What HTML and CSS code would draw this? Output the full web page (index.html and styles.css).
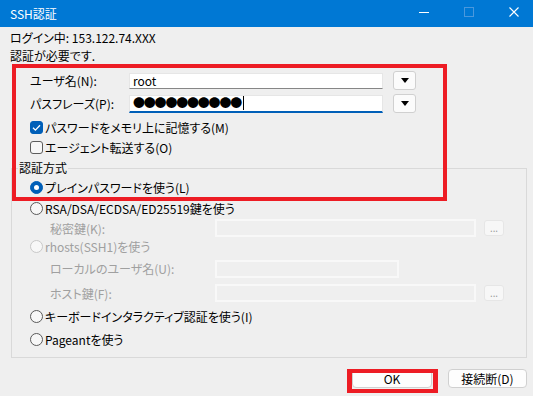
FILE: index.html
```html
<!DOCTYPE html>
<html lang="ja">
<head>
  <meta charset="UTF-8" />
  <title>SSH認証</title>
  <link rel="stylesheet" href="styles.css">
</head>
<body>
  <div class="window">
    <div class="titlebar">
      <span class="title">SSH認証</span>
      <div class="controls">
        <span class="ctl min"></span>
        <span class="ctl max"></span>
        <span class="ctl close">
          <svg width="10" height="10" viewBox="0 0 10 10"><path d="M0.5 0.5L9.5 9.5M9.5 0.5L0.5 9.5" stroke="#fff" stroke-width="1.1" fill="none"/></svg>
        </span>
      </div>
    </div>

    <div class="content">
      <div class="info">ログイン中: 153.122.74.XXX</div>
      <div class="info">認証が必要です.</div>

      <div class="field-row user">
        <span class="field-label">ユーザ名(N):</span>
        <div class="text-input">root</div>
        <button class="drop"><span class="tri"></span></button>
      </div>
      <div class="field-row pass">
        <span class="field-label">パスフレーズ(P):</span>
        <div class="text-input focused"><span class="dots">●●●●●●●●●●</span><span class="caret"></span></div>
        <button class="drop"><span class="tri"></span></button>
      </div>

      <div class="check-row first">
        <span class="check on">
          <svg width="13" height="13" viewBox="0 0 13 13"><path d="M3 6.8L5.4 9.1L10 4.2" stroke="#fff" stroke-width="1.3" fill="none"/></svg>
        </span>
        <span>パスワードをメモリ上に記憶する(M)</span>
      </div>
      <div class="check-row">
        <span class="check"></span>
        <span>エージェント転送する(O)</span>
      </div>

      <fieldset class="group">
        <legend>認証方式</legend>
        <div class="opt h21"><span class="radio on"></span><span>プレインパスワードを使う(L)</span></div>
        <div class="opt h21"><span class="radio"></span><span>RSA/DSA/ECDSA/ED25519鍵を使う</span></div>
        <div class="sub h18">
          <span class="sub-label">秘密鍵(K):</span>
          <div class="text-input disabled wide"></div>
          <button class="more">...</button>
        </div>
        <div class="opt h19 disabled"><span class="radio dim"></span><span>rhosts(SSH1)を使う</span></div>
        <div class="sub h25">
          <span class="sub-label">ローカルのユーザ名(U):</span>
          <div class="text-input disabled short"></div>
        </div>
        <div class="sub h24">
          <span class="sub-label">ホスト鍵(F):</span>
          <div class="text-input disabled wide"></div>
          <button class="more">...</button>
        </div>
        <div class="opt h23"><span class="radio"></span><span>キーボードインタラクティブ認証を使う(I)</span></div>
        <div class="opt h22"><span class="radio"></span><span>Pageantを使う</span></div>
      </fieldset>

      <div class="actions">
        <button class="btn ok">OK</button>
        <button class="btn">接続断(D)</button>
      </div>
    </div>

    <div class="mark mark-fields"></div>
    <div class="mark mark-ok"></div>
  </div>
</body>
</html>
```

FILE: styles.css
```css
* { box-sizing: border-box; }
body {
  margin: 0;
  font-family: "Noto Sans CJK JP", "Noto Sans", sans-serif;
  font-size: 12px;
  font-feature-settings: "palt";
  color: #000;
  background: #efefef;
}
.window {
  position: relative;
  width: 533px; height: 396px;
  overflow: hidden;
}

/* title bar */
.titlebar {
  height: 27px;
  background: #0078d4;
  color: #fff;
  display: flex;
  align-items: center;
  justify-content: space-between;
  padding-left: 10px;
}
.controls {
  display: flex;
  gap: 35px;
  align-self: flex-start;
  padding: 7px 14px 0 0;
}
.ctl { width: 10px; height: 10px; position: relative; display: block; }
.ctl svg { display: block; }
.ctl.min::before {
  content: ""; position: absolute;
  left: 0; right: 0; top: 5px; height: 1px;
  background: #fff;
}
.ctl.max { border: 1px solid #4a98dd; }

/* body */
.content { padding: 2px 6px 0 10px; }
.info { line-height: 18px; }

.field-row {
  display: flex; align-items: center;
  height: 21px; padding-left: 20px;
}
.field-row.user { margin-top: 5px; }
.field-row.pass { margin-top: 2px; }
.field-label { width: 99px; }
.text-input {
  width: 254px; height: 16px;
  background: #fff;
  border: 1px solid #e6e6e6;
  border-bottom-color: #868686;
  padding-left: 3px;
  line-height: 14px;
  display: flex; align-items: center;
}
.text-input.focused {
  height: 18px;
  border-bottom: 2px solid #005fb8;
}
.dots { font-size: 12px; letter-spacing: -1.2px; line-height: 14px; }
.caret { width: 1px; height: 14px; background: #000; margin-left: 2px; }
.drop {
  margin-left: 10px;
  width: 23px; height: 19px;
  padding: 0;
  border: 1px solid #d0d0d0; border-radius: 3px;
  background: #fbfbfb;
  display: flex; align-items: center; justify-content: center;
}
.tri {
  width: 0; height: 0;
  border-left: 4.5px solid transparent;
  border-right: 4.5px solid transparent;
  border-top: 5px solid #000;
}

.check-row {
  display: flex; align-items: center; gap: 2px;
  height: 19px; padding-left: 20px;
  margin-top: 1px;
}
.check-row.first { margin-top: 4px; }
.check {
  width: 13px; height: 13px; flex: none;
  border: 1px solid #5d5d5d; border-radius: 3px;
  background: #f7f7f7;
}
.check.on { border-color: #005fb8; background: #005fb8; }
.check svg { display: block; margin: -1px; }

/* group box */
.group {
  margin: 3px 0 0 1px;
  padding: 1px 0 7px 0;
  border: 1px solid #d9d9d9;
  min-width: 0;
}
.group legend {
  margin-left: 6px;
  padding: 0 1px;
  line-height: 16px;
}
.opt {
  display: flex; align-items: center; gap: 2px;
  padding-left: 18px;
}
.opt.disabled, .sub { color: #a0a0a0; }
.sub { display: flex; align-items: center; padding-left: 38px; }
.sub-label { width: 165px; }
.h18 { height: 18px; }
.h19 { height: 19px; }
.h21 { height: 21px; }
.h22 { height: 22px; }
.h23 { height: 23px; }
.h24 { height: 24px; }
.h25 { height: 25px; }

.radio {
  width: 13px; height: 13px; flex: none;
  border: 1px solid #5a5a5a; border-radius: 50%;
  background: #f7f7f7;
  display: flex; align-items: center; justify-content: center;
}
.radio.on { border-color: #005fb8; background: #005fb8; }
.radio.on::after {
  content: ""; width: 5px; height: 5px;
  border-radius: 50%; background: #fff;
}
.radio.dim { border-color: #c8c8c8; }

.text-input.disabled {
  height: 18px;
  background: #efefef;
  border: 2px solid #f8f8f8;
}
.text-input.wide { width: 261px; }
.text-input.short { width: 184px; }
.more {
  margin-left: 8px;
  width: 20px; height: 16px; padding: 0;
  border: 1px solid #e6e6e6; border-radius: 3px;
  background: #f7f7f7;
  color: #9a9a9a;
  font: 10px/14px "Noto Sans", sans-serif;
}

/* buttons */
.actions {
  display: flex; justify-content: flex-end; gap: 16px;
  margin-top: 11px;
}
.btn {
  width: 79px; height: 19px; padding: 0;
  border: 1px solid #d0d0d0; border-radius: 4px;
  background: #fdfdfd;
  font: 12px/17px "Noto Sans CJK JP", sans-serif;
  font-feature-settings: "palt";
  color: #000;
}
.btn.ok { width: 80px; }

/* red annotation frames */
.mark {
  position: absolute;
  border: 4px solid #ed1c24;
  pointer-events: none;
}
.mark-fields { left: 12px; top: 64px; width: 435px; height: 137px; }
.mark-ok { left: 347px; top: 369px; width: 91px; height: 24px; border-width: 4px 5px; }
```
